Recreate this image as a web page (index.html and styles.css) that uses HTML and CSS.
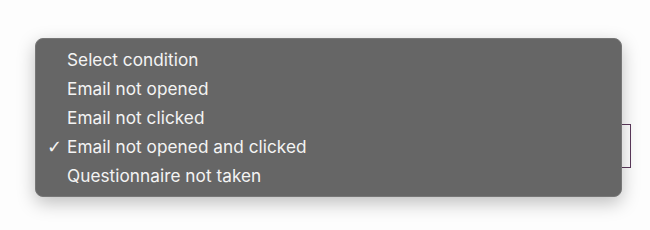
FILE: index.html
```html
<!DOCTYPE html>
<html lang="en">
<head>
  <meta charset="UTF-8"/>
  <title>Condition select</title>
  <link rel="stylesheet" href="styles.css">
</head>
<body>

  <div class="field">
    <div class="select-box"></div>

    <!-- open dropdown -->
    <ul class="menu">
      <li>Select condition</li>
      <li>Email not opened</li>
      <li>Email not clicked</li>
      <li class="checked">Email not opened and clicked</li>
      <li>Questionnaire not taken</li>
    </ul>
  </div>

</body>
</html>
```

FILE: styles.css
```css
html, body {
  height: 100%;
}

body {
  margin: 0;
  background-color: #fdfdfd;
  font-family: 'Inter', 'Noto Sans', sans-serif;
}

.field {
  position: relative;
  min-height: 230px;
  box-sizing: border-box;
  padding: 124px 19px 0 60px;
}

.select-box {
  height: 42px;
  border: 1px solid #5c3a5c;
  background: #fff;
}

.menu {
  position: absolute;
  top: 38px;
  left: 35px;
  width: 587px;
  height: 159px;
  box-sizing: border-box;
  margin: 0;
  padding: 6px 0 0 0;
  list-style: none;
  background-color: #666;
  border: 1px solid #777;
  border-radius: 8px;
  box-shadow: 0 6px 18px rgba(0,0,0,0.25);
}

.menu li {
  position: relative;
  height: 29px;
  line-height: 29px;
  padding-left: 31px;
  color: #f4f4f4;
  font-size: 17.2px;
  letter-spacing: 0.05px;
}

.menu li.checked::before {
  content: "✓";
  position: absolute;
  left: 11px;
  font-size: 18px;
  font-family: 'DejaVu Sans', sans-serif;
}
```
